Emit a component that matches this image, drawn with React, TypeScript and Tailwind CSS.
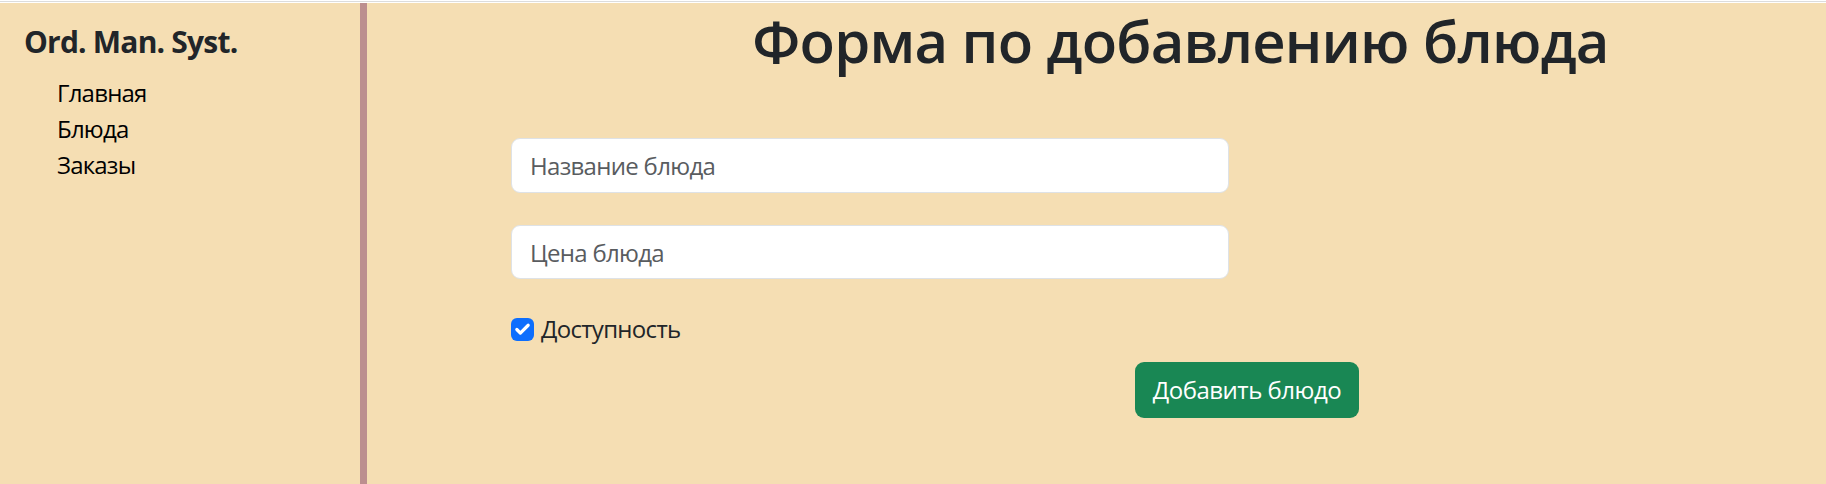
import { Check } from 'lucide-react';

export default function App() {
  const links = ['Главная', 'Блюда', 'Заказы'];

  return (
    <div className="min-h-screen flex flex-col bg-[#f5deb3] text-[#212529]" style={{ fontFamily: '"Open Sans", "Noto Sans", sans-serif' }}>
      <div className="h-[3px] bg-white flex flex-col justify-center">
        <div className="h-px bg-[#dcdcdc]" />
      </div>

      <div className="flex flex-1">
        <aside className="w-[367px] shrink-0 border-r-[7px] border-[#bc8f8f] px-6 pt-[21px]">
          <h4 className="text-[30px] font-bold leading-[36px] tracking-[-0.8px]">Ord. Man. Syst.</h4>
          <ul className="mt-[15px] ml-[33px]">
            {links.map((l) => (
              <li key={l} className="text-[24px] leading-[36px] tracking-[-0.8px] text-black">{l}</li>
            ))}
          </ul>
        </aside>

        <main className="flex-1">
          <h1 className="pl-[168px] pt-[2px] text-center text-[58px] font-semibold leading-[72px] tracking-[-0.8px]">Форма по добавлению блюда</h1>

          <div className="ml-[144px] mt-[61px] w-[718px]">
            <input
              placeholder="Название блюда"
              className="block w-full h-[55px] bg-white border border-[#dee2e6] rounded-[9px] px-[18px] text-[24px] tracking-[-0.7px] outline-none placeholder:text-[#595c5f]"
            />
            <input
              placeholder="Цена блюда"
              className="block w-full h-[54px] mt-[32px] bg-white border border-[#dee2e6] rounded-[9px] px-[18px] text-[24px] tracking-[-0.7px] outline-none placeholder:text-[#595c5f]"
            />
            <label className="mt-[32px] flex items-center text-[24px] leading-[36px] tracking-[-0.7px]">
              <span className="w-[23px] h-[23px] rounded-[6px] bg-[#0d6efd] flex items-center justify-center">
                <Check className="w-[17px] h-[17px] text-white" strokeWidth={4.5} />
              </span>
              <span className="ml-[7px]">Доступность</span>
            </label>
          </div>

          <button className="ml-[768px] mt-[15px] h-[56px] w-[224px] rounded-[9px] bg-[#198754] text-white text-[24px] tracking-[-0.5px]">
            Добавить блюдо
          </button>
        </main>
      </div>
    </div>
  );
}
